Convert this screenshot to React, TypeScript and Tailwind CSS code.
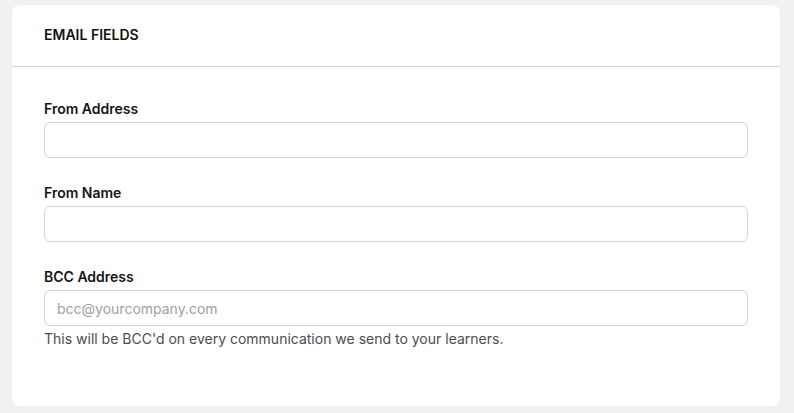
import React from "react";

type Field = {
  id: string;
  label: string;
  placeholder?: string;
  help?: string;
};

const FIELDS: Field[] = [
  { id: "from-address", label: "From Address" },
  { id: "from-name", label: "From Name" },
  {
    id: "bcc-address",
    label: "BCC Address",
    placeholder: "bcc@yourcompany.com",
    help: "This will be BCC'd on every communication we send to your learners.",
  },
];

export default function App() {
  return (
    <div
      className="min-h-[413px] bg-[#f0f1f3] pt-[5px] pl-3 pr-[14px] pb-[7px]"
      style={{ fontFamily: "Inter, 'Noto Sans', sans-serif" }}
    >
      <section className="rounded-lg bg-white">
        {/* Header */}
        <div className="flex h-[62px] items-center border-b border-[#d3d7dd] px-8 pb-[2px]">
          <h2 className="text-sm font-semibold text-[#111111]">EMAIL FIELDS</h2>
        </div>

        {/* Fields */}
        <div className="flex flex-col gap-[25px] px-8 pt-8 pb-[57px]">
          {FIELDS.map((f) => (
            <div key={f.id}>
              <label
                htmlFor={f.id}
                className="mb-[3px] block text-sm leading-5 font-semibold text-[#151515]"
              >
                {f.label}
              </label>
              <input
                id={f.id}
                type="text"
                placeholder={f.placeholder}
                className="h-9 w-full rounded-md border border-[#cfd2d7] bg-white px-3 text-sm text-[#151515] outline-none placeholder:text-[#9ca0a7]"
              />
              {f.help && (
                <p className="mt-[3px] text-sm leading-5 text-[#4a4d52]">{f.help}</p>
              )}
            </div>
          ))}
        </div>
      </section>
    </div>
  );
}
